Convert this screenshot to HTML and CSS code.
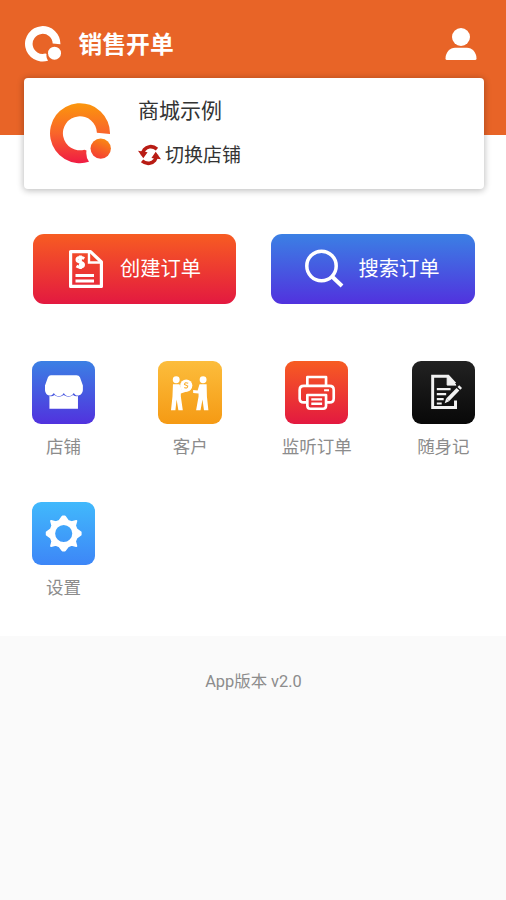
FILE: index.html
```html
<!DOCTYPE html>
<html lang="zh-CN">
<head>
<meta charset="utf-8">
<title>销售开单</title>
<link rel="stylesheet" href="styles.css">
</head>
<body>
<svg class="defs" width="0" height="0">
  <defs>
    <linearGradient id="warm" gradientUnits="userSpaceOnUse" x1="0" y1="0" x2="0" y2="60"><stop offset="0" stop-color="#fb970c"/><stop offset=".5" stop-color="#f9652a"/><stop offset="1" stop-color="#f01c43"/></linearGradient>
    <linearGradient id="dot" x1=".7" y1="0" x2=".3" y2="1"><stop offset="0" stop-color="#f98b12"/><stop offset="1" stop-color="#f43a35"/></linearGradient>
    <path id="ring" d="M60 31A30 30 0 1 0 39 58.800Q35.500 54 36.500 47.500L34.500 46.700A17 17 0 1 1 46.900 29.800Z"/>
  </defs>
</svg>
<header class="header">
  <svg class="brand" viewBox="0 0 61 61" fill="#fff"><use href="#ring"/><circle cx="50" cy="46" r="11"/></svg>
  <h1 class="title">销售开单</h1>
  <svg class="user" viewBox="0 0 32 33" fill="#fff"><circle cx="16" cy="9" r="9"/><path d="M.5 30.5C.5 24.5 5 19.8 10 19.8H22C27 19.8 31.5 24.5 31.5 30.5Q31.500 32 30 32H2Q.5 32 .5 30.500Z"/></svg>
</header>
<main class="main">
  <section class="shop">
    <svg class="shop-logo" viewBox="0 0 61 61"><use href="#ring" fill="url(#warm)"/><circle cx="50.700" cy="45.600" r="10.200" fill="url(#dot)"/></svg>
    <div class="shop-info">
      <div class="shop-name">商城示例</div>
      <div class="switch">
        <svg class="swap" viewBox="0 0 24 22" fill="none" stroke="#b81c14" stroke-width="3.800"><path d="M4.800 11C4.500 7 7.500 3 12 2.400Q16 1.700 19.800 4.800"/><path d="M19.200 11C19.500 15 16.500 19 12 19.600Q8 20.300 4.200 17.200"/><path d="M0 6.500 10 8 5.500 14.500Z M24 15.500 14 14 18.500 7.500Z" fill="#b81c14" stroke="none"/></svg>
        <span>切换店铺</span>
      </div>
    </div>
  </section>
  <section class="actions">
    <div class="action red">
      <svg class="action-icon" viewBox="0 0 40 40" fill="none" stroke="#fff" stroke-width="3.200"><path d="M4.600 2.600H24.500L35.400 13V37.400H4.600Z" stroke-linejoin="round"/><path d="M23 3V13.500H35" stroke-width="2.400"/><path d="M9.500 26.500H28M9.500 32H28" stroke-width="2.800"/><path d="M18.300 9.500C14.500 7.500 11 8.500 11 10.800C11 14.500 17.500 12 17.500 15.700C17.500 18.200 13.500 19 10.500 17M14.400 6.500V20" stroke-width="3"/></svg>
      <span>创建订单</span>
    </div>
    <div class="action blue">
      <svg class="action-icon" viewBox="0 0 40 40" fill="none" stroke="#fff" stroke-width="3.500"><circle cx="17.500" cy="17" r="14.700"/><path d="M28 27.500 38 37" stroke-width="4"/></svg>
      <span>搜索订单</span>
    </div>
  </section>
  <section class="grid">
    <div class="item"><svg class="tile blue" viewBox="0 0 64 64" fill="#fff"><path d="M19 14.500H45Q47.500 14.500 48.500 16.500L51.500 25V29C51.500 35.500 44.500 37 42.200 32.500C39.500 37 34.500 37 32.100 32.500C29.500 37 24.500 37 22 32.500C19.500 37 13 35.500 13 29V25L16 16.500Q17 14.500 19 14.500Z"/><path d="M17.500 35.500Q20.500 36.500 22.500 34.500Q27 38.200 32 34.500Q37 38.200 41.500 34.500Q44 36.500 46.500 35.500V48.500H17.500Z"/></svg><span>店铺</span></div>
    <div class="item"><svg class="tile yellow" viewBox="0 0 64 64" fill="#fff"><circle cx="18.300" cy="19" r="3.500"/><path d="M15 23.500H21.500L24 29 30 27.500 32 30 23 33V36L25 50H20.500L18.700 39 17.500 50H13L14.500 36Z"/><circle cx="28.500" cy="25" r="6.200"/><path d="M30.500 22.700Q27 21 26.700 23.800L30 25.500Q29.500 28.500 26.500 27" fill="none" stroke="#f9ae2e" stroke-width="1.100"/><circle cx="45.600" cy="19" r="3.500"/><path d="M42 23.500H49.200L49.500 36 51 50H46.500L45 39 43 50H38.500L41 36V33L35.500 32.500V29.500L40 30Z"/></svg><span>客户</span></div>
    <div class="item"><svg class="tile red" viewBox="0 0 64 64" fill="none" stroke="#fff" stroke-width="2.700" stroke-linejoin="round"><path d="M22.500 25V16.300H41.500V25"/><path d="M22 42H19Q14.700 42 14.700 38V29.500Q14.700 25.300 19 25.300H45Q49.300 25.300 49.300 29.500V38Q49.300 42 45 42H42"/><path d="M22.500 34.500H41.500V45.500Q41.500 48.500 38.500 48.500H25.500Q22.500 48.500 22.500 45.500Z"/><path d="M26.500 39H37.500M26.500 43.500H37.500" stroke-width="2.500"/><path d="M39.500 29.700H44.500" stroke-width="2.200"/></svg><span>监听订单</span></div>
    <div class="item"><svg class="tile black" viewBox="0 0 64 64" fill="none" stroke="#f2f2f2" stroke-width="3"><path d="M44 40V47.300H20.800V15.500H36.500L43.500 23"/><path d="M35.500 15V24.500H44.500Z" fill="#f2f2f2" stroke-width="1"/><path d="M25 28.500H39M25 33.700H34.500M25 38.800H32M25 43.200H30" stroke-width="2.200"/><path d="M36 39.500 46.500 28.700" stroke-width="4"/><path d="M47.500 27.700 49.200 26" stroke-width="4"/><path d="M34.500 38 37.500 41 33 43Z" fill="#f2f2f2" stroke="none"/></svg><span>随身记</span></div>
    <div class="item"><svg class="tile sky" viewBox="0 0 64 64" fill="#fff"><path fill-rule="evenodd" stroke="#fff" stroke-width="2" stroke-linejoin="round" d="M30.800 14.800H33.200L36.300 19.200 40 20.600 44.800 19.200 44.800 19.300 43.500 24 45 27.700 49.200 30.800V33.200L45 36.300 43.500 40 44.800 44.800 40 43.500 36.300 45 33.200 49.200H30.800L27.700 45 24 43.500 19.200 44.800 20.500 40 19 36.300 14.800 33.200V30.800L19 27.700 20.500 24 19.200 19.200 24 20.500 27.700 19.200ZM32 22.300A9.700 9.700 0 1 0 32 41.700A9.700 9.700 0 1 0 32 22.300Z"/></svg><span>设置</span></div>
  </section>
</main>
<footer class="footer">App版本 v2.0</footer>
</body>
</html>
```
FILE: styles.css
```css
* { box-sizing: border-box; }
body {
  margin: 0;
  min-height: 900px;
  background: #fafafa;
  font-family: Roboto, "Noto Sans CJK SC", sans-serif;
  color: #333;
}
.defs { display: block; }
.header {
  display: flex;
  align-items: flex-start;
  height: 135px;
  padding: 26px 29px 0 25px;
  background: #e86427;
}
.brand { width: 36px; height: 36px; }
.title {
  flex: 1;
  margin: 1px 0 0 17.500px;
  font-size: 23.800px;
  line-height: 36px;
  font-weight: 700;
  color: #fff;
}
.user { width: 32px; height: 33px; margin-top: 2px; }
.main {
  height: 501px;
  background: #fff;
}
.shop {
  position: relative;
  top: -57px;
  display: flex;
  width: 460px;
  height: 111px;
  margin: 0 0 -12px 24px;
  padding: 25px 26px 0;
  border-radius: 4px;
  background: #fff;
  box-shadow: 0 1px 6px 1px rgba(0, 0, 0, .24);
}
.shop-logo { width: 61px; height: 61px; }
.shop-info { margin: -7px 0 0 27px; }
.shop-name { font-size: 21px; line-height: 30px; }
.switch {
  display: flex;
  align-items: center;
  gap: 4px;
  margin-top: 16px;
  font-size: 19px;
  line-height: 28px;
}
.swap { width: 23px; height: 22px; margin-top: -2px; }
.actions {
  display: flex;
  gap: 35px;
  padding-left: 33px;
}
.action {
  display: flex;
  align-items: center;
  gap: 14px;
  width: 203.400px;
  height: 70px;
  padding-left: 33px;
  border-radius: 11px;
  font-size: 20.300px;
  line-height: 28px;
  color: #fff;
}
.action-icon { width: 40px; height: 40px; }
.grid {
  display: grid;
  grid-template-columns: repeat(4, 126.600px);
  grid-auto-rows: 140.500px;
  padding: 57px 0 0 .3px;
}
.item {
  display: flex;
  flex-direction: column;
  align-items: center;
  font-size: 17.500px;
  line-height: 26px;
  color: #8c8c8c;
}
.tile {
  width: 63.400px;
  height: 63px;
  margin-bottom: 10px;
  border-radius: 9px;
}
.red { background: linear-gradient(#f75c22, #e31940); }
.blue { background: linear-gradient(#3b80e4, #5132de); }
.yellow { background: linear-gradient(#fcbd3c, #f59a14); }
.black { background: linear-gradient(#222, #080808); }
.sky { background: linear-gradient(#41b9fc, #3d86f7); }
.footer {
  padding: 34px 0 0 1px;
  text-align: center;
  font-size: 16.400px;
  line-height: 24px;
  color: #8c8c8c;
}
```
